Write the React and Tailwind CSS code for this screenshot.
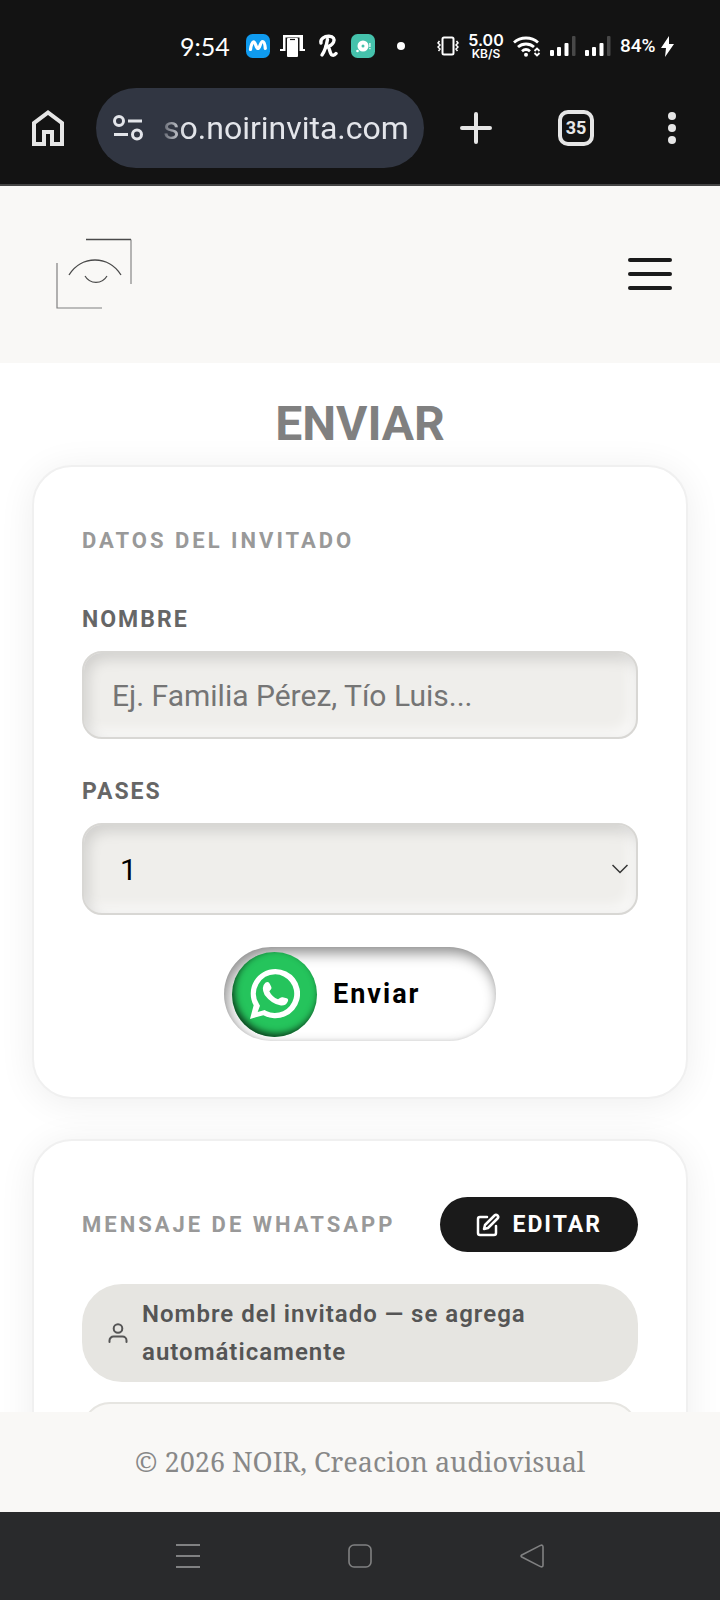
import { FiEdit } from 'react-icons/fi'

function Signal() {
  return (
    <svg width="26" height="20" viewBox="0 0 26 20" fill="#fff">
      <rect x="0" y="14" width="4" height="6" rx="1" />
      <rect x="7" y="11" width="4" height="9" rx="1" />
      <rect x="14.5" y="7" width="4" height="13" rx="1" />
      <rect x="22" y="0" width="3.5" height="20" rx="1" fill="#484848" />
    </svg>
  )
}

function StatusBar() {
  return (
    <div className="flex h-22 items-center justify-between pt-1 pr-[46px] pl-[180px] text-white">
      <div className="flex items-center">
        <span className="w-15 font-['Lato'] text-[25px] leading-8">9:54</span>
        <span className="grid w-[35px] place-items-center">
          <svg width="24" height="24" viewBox="0 0 24 24">
            <rect width="24" height="24" rx="6.5" fill="#0f9bf0" />
            <path d="M4.5 15.5C5 11 6.5 7.5 8 8c1.7.6 2 6.5 4 6.5S14.3 7.500 16.500 7.500c1.800 0 2.500 3.500 2.800 7" fill="none" stroke="#fff" strokeWidth="3.2" strokeLinecap="round" />
          </svg>
        </span>
        <span className="grid w-[35px] place-items-center">
          <svg width="25" height="24" viewBox="0 0 25 24">
            <path d="M3 1h20v14h2v2H0v-2h3z" fill="#fff" />
            <rect x="5.5" y="3.5" width="14" height="20.5" fill="#131313" />
            <path d="M8 4h9a1 1 0 0 1 1 1v17a1 1 0 0 1-1 1H8a1 1 0 0 1-1-1V5a1 1 0 0 1 1-1z" fill="#fff" />
            <path d="M10 5.500h5" stroke="#131313" strokeWidth="1.2" />
          </svg>
        </span>
        <span className="grid w-[35px] place-items-center">
          <svg width="20" height="24" viewBox="0 0 20 24" fill="none" stroke="#fff" strokeWidth="3.4" strokeLinecap="round">
            <path d="M3 9C2 5 6.500 2 11 2.200c4.500.200 6 3 4.500 6C14 11 10.500 12.500 8 12.500" />
            <path d="M9.500 5.500C8.500 11 7 17 4 21" />
            <path d="M9.500 13c2.500 0 2 7 4.500 8 1.500.600 3-.200 4-1.500" />
          </svg>
        </span>
        <span className="grid w-[35px] place-items-center">
          <svg width="24" height="24" viewBox="0 0 24 24" fill="#fff">
            <rect width="24" height="24" rx="6.5" fill="#45c2ac" />
            <circle cx="12" cy="12" r="5.5" />
            <circle cx="12" cy="12" r="1.5" fill="#45c2ac" />
            <circle cx="6.5" cy="17" r="1.3" />
            <rect x="18.3" y="9" width="1.2" height="4" />
            <rect x="18.3" y="14" width="1.2" height="1.2" />
          </svg>
        </span>
        <span className="grid w-[42px] place-items-center">
          <span className="size-2 rounded-full bg-white" />
        </span>
      </div>

      <div className="flex items-center gap-[9px]">
        <svg width="22" height="20" viewBox="0 0 22 20" fill="none" stroke="#fff">
          <rect x="5.5" y="1.5" width="11" height="17" rx="1.5" strokeWidth="2" />
          <path d="M2.500 5l-1.500 2 2 2-2 2 2 2-1.500 2M19.500 5l1.500 2-2 2 2 2-2 2 1.500 2" strokeWidth="1.5" />
        </svg>
        <div className="w-9 text-center font-['Inter'] font-semibold">
          <div className="text-[16px] leading-4">5.00</div>
          <div className="text-[12px] leading-3">KB/S</div>
        </div>
        <svg width="28" height="21" viewBox="0 0 28 21" fill="none" stroke="#fff" strokeWidth="2.8">
          <path d="M1 6.500C7.500.500 18.500.500 25 6.500" />
          <path d="M5 11c4.500-4 11.500-4 16 0" />
          <path d="M9 15.200c2.500-2.200 5.500-2.200 8 0" />
          <circle cx="13" cy="18.7" r="2" fill="#fff" stroke="none" />
          <path d="M21.500 15l2.500-2.500 2.500 2.500M21.500 17l2.500 2.500 2.500-2.500" strokeWidth="1.8" />
        </svg>
        <Signal />
        <Signal />
        <div className="flex items-center gap-1">
          <span className="w-[37px] text-[19px] leading-6 font-medium">84%</span>
          <svg width="13" height="21" viewBox="0 0 13 21" fill="#fff">
            <path d="M8 0L0 12h5L4 21l9-13H8z" />
          </svg>
        </div>
      </div>
    </div>
  )
}

function BrowserBar() {
  return (
    <div className="flex items-center border-b-2 border-[#444444] pb-4">
      <button aria-label="Inicio" className="grid w-24 place-items-center">
        <svg width="32" height="36" viewBox="0 0 32 36" fill="#e6e6e6" fillRule="evenodd">
          <path d="M0 12L16 0l16 12v24H18V24h-4v12H0zM4 14v18h6V20h12v12h6V14L16 5z" />
        </svg>
      </button>
      <div className="flex h-20 min-w-0 flex-1 items-center rounded-full bg-[#313642] pl-[17px]">
        <svg width="30" height="28" viewBox="0 0 30 28" fill="none" stroke="#e3e5ea" strokeWidth="3">
          <circle cx="6" cy="7" r="4.5" />
          <path d="M15 7h14M1 20.500h14" />
          <circle cx="24" cy="20.5" r="4.5" />
        </svg>
        <span className="ml-5 [mask-image:linear-gradient(to_right,rgba(0,0,0,0.3),#000_22px)] text-[32px] leading-10 text-[#e3e5ea]">
          so.noirinvita.com
        </span>
      </div>
      <button aria-label="Nueva pestaña" className="grid w-26 place-items-center">
        <svg width="32" height="32" viewBox="0 0 32 32" stroke="#e6e6e6" strokeWidth="4" strokeLinecap="round">
          <path d="M16 2v28M2 16h28" />
        </svg>
      </button>
      <button className="grid w-24 place-items-center">
        <span className="grid size-9 place-items-center rounded-[10px] border-4 border-[#e6e6e6] text-[18px] leading-6 font-bold text-[#e6e6e6]">35</span>
      </button>
      <button aria-label="Menú del navegador" className="grid w-24 place-items-center">
        <svg width="8" height="32" viewBox="0 0 8 32" fill="#e6e6e6">
          <circle cx="4" cy="4" r="4" />
          <circle cx="4" cy="16" r="4" />
          <circle cx="4" cy="28" r="4" />
        </svg>
      </button>
    </div>
  )
}

function SiteHeader() {
  return (
    <header className="flex shrink-0 items-center justify-between bg-[#f9f8f6] px-12 pt-10 pb-[41px]">
      <a href="#inicio" aria-label="NOIR">
        <svg width="96" height="96" viewBox="0 0 96 96" fill="none" stroke="#4a4a4a">
          <path d="M38 13.500h45" strokeWidth="1.5" />
          <path d="M83 13.500V58" stroke="#707070" />
          <path d="M9 37v45h45" stroke="#808080" strokeWidth="1.2" />
          <path d="M21 49c12-20 40-20 52 0" strokeWidth="1.3" />
          <path d="M37 50c5 8.500 17 8.500 22 0" strokeWidth="1.2" />
        </svg>
      </a>
      <button aria-label="Menú" className="flex w-11 flex-col gap-[10px]">
        <span className="h-1 w-full rounded-full bg-[#1a1a1a]" />
        <span className="h-1 w-full rounded-full bg-[#1a1a1a]" />
        <span className="h-1 w-full rounded-full bg-[#1a1a1a]" />
      </button>
    </header>
  )
}

const card = 'rounded-[40px] border-2 border-[#f0f0f0] bg-white px-12 py-14 shadow-[0_4px_36px_rgba(0,0,0,0.07)]'
const cardTitle = 'text-[22px] leading-9 font-bold tracking-[3px] text-[#999999]'
const label = 'mb-[17px] block text-[23px] leading-7 font-bold tracking-[2px] text-[#666666]'
const field = 'w-full rounded-[20px] border-2 border-[#d8d7d4] bg-[#efeeeb] text-[30px] shadow-[inset_4px_6px_14px_rgba(0,0,0,0.13),inset_-6px_-6px_14px_rgba(255,255,255,0.7)]'

function WhatsappIcon() {
  return (
    <svg width="50" height="50" viewBox="0 0 150 150" fill="#fff">
      <path fillRule="evenodd" d="M76 0a74 74 0 1 1-36 138.500L0 150l11-41A74 74 0 0 1 76 0zm0 16a58 58 0 0 0-49 89l3 5-7 19 21-6 5 3A58 58 0 1 0 76 16z" />
      <path d="M46 41Q56 35 60 46L64 54Q66 58 62 62L58 67Q66 84 84 91L90 87Q94 84 98 85L110 88Q117 91 113 98Q106 112 90 109Q64 104 44 78Q32 54 46 41Z" />
    </svg>
  )
}

function GuestForm() {
  return (
    <form className={card}>
      <h2 className={cardTitle}>DATOS DEL INVITADO</h2>
      <div className="mt-[47px]">
        <label htmlFor="nombre" className={label}>NOMBRE</label>
        <input id="nombre" type="text" placeholder="Ej. Familia Pérez, Tío Luis..." className={`${field} h-22 px-7 placeholder:text-[#757575]`} />
      </div>
      <div className="mt-[39px]">
        <label htmlFor="pases" className={label}>PASES</label>
        <div className="relative">
          <select id="pases" defaultValue="1" className={`${field} h-23 appearance-none px-9 text-black`}>
            <option>1</option>
          </select>
          <svg className="pointer-events-none absolute top-1/2 right-[10px] -translate-y-1/2" width="16" height="10" viewBox="0 0 16 10" fill="none" stroke="#333" strokeWidth="1.5">
            <path d="M.5 1L8 8.500 15.500 1" />
          </svg>
        </div>
      </div>
      <button type="button" className="mx-auto mt-8 flex h-[94px] w-[272px] items-center gap-4 rounded-full bg-white pl-2 shadow-[inset_3px_6px_14px_rgba(0,0,0,0.45),inset_0_-1px_3px_rgba(0,0,0,0.06)]">
        <span className="grid size-[85px] place-items-center rounded-full bg-[#25c45c] shadow-[inset_2px_-3px_7px_rgba(0,0,0,0.7)]">
          <WhatsappIcon />
        </span>
        <span className="text-[27px] leading-8 font-bold tracking-[2px] text-black">Enviar</span>
      </button>
    </form>
  )
}

function MessageCard() {
  return (
    <section className={`${card} mt-10`}>
      <div className="flex items-center justify-between">
        <h2 className={cardTitle}>MENSAJE DE WHATSAPP</h2>
        <button className="flex h-[55px] items-center gap-3 rounded-full bg-[#1a1a1a] px-9 text-[23px] leading-7 font-bold tracking-[2px] text-white">
          <FiEdit size={24} strokeWidth={2.5} />
          EDITAR
        </button>
      </div>
      <div className="mt-8 flex items-center gap-[14px] rounded-[40px] bg-[#e6e5e1] px-[26px] py-[11px]">
        <svg className="shrink-0" width="20" height="20" viewBox="0 0 20 20" fill="none" stroke="#555" strokeWidth="2">
          <circle cx="10" cy="5.5" r="4.3" />
          <path d="M1.500 19v-1.500a4 4 0 0 1 4-4h9a4 4 0 0 1 4 4V19" strokeLinecap="round" />
        </svg>
        <p className="text-[24px] leading-[38px] font-semibold tracking-[1px] text-[#555555]">
          Nombre del invitado — se agrega automáticamente
        </p>
      </div>
      <textarea aria-label="Mensaje" rows={6} className="mt-5 block w-full resize-none rounded-[28px] border-2 border-[#e6e5e1] bg-[#f9f8f6]" />
    </section>
  )
}

function NavBar() {
  return (
    <nav className="flex h-22 shrink-0 items-center justify-center gap-[148px] bg-[#292a2c]">
      <button aria-label="Recientes">
        <svg width="24" height="24" viewBox="0 0 24 24" stroke="#808182" strokeWidth="2">
          <path d="M0 1h24M0 12h24M0 23h24" />
        </svg>
      </button>
      <button aria-label="Inicio">
        <svg width="24" height="24" viewBox="0 0 24 24" fill="none" stroke="#808182" strokeWidth="1.6">
          <rect x="1" y="1" width="22" height="22" rx="5" />
        </svg>
      </button>
      <button aria-label="Atrás">
        <svg width="24" height="24" viewBox="0 0 24 24" fill="none" stroke="#808182" strokeWidth="1.6" strokeLinejoin="round">
          <path d="M1.800 11L20.500 1.400Q23 .500 23 3v18q0 2.500-2.500 1.600L1.800 13q-1.500-1 0-2z" />
        </svg>
      </button>
    </nav>
  )
}

export default function App() {
  return (
    <div className="flex h-screen flex-col bg-white font-['Roboto',sans-serif]">
      <div className="shrink-0 bg-[#131313]">
        <StatusBar />
        <BrowserBar />
      </div>
      <SiteHeader />
      <main className="min-h-0 flex-1 overflow-hidden px-8 pt-[33px]">
        <h1 className="mb-[13px] text-center text-[48px] leading-14 font-bold text-[#808080]">ENVIAR</h1>
        <GuestForm />
        <MessageCard />
      </main>
      <footer className="shrink-0 bg-[#f9f8f6] py-[30px] text-center font-['Noto_Serif','Liberation_Serif',serif] text-[27px] leading-10 text-[#888888]">
        © 2026 NOIR, Creacion audiovisual
      </footer>
      <NavBar />
    </div>
  )
}
